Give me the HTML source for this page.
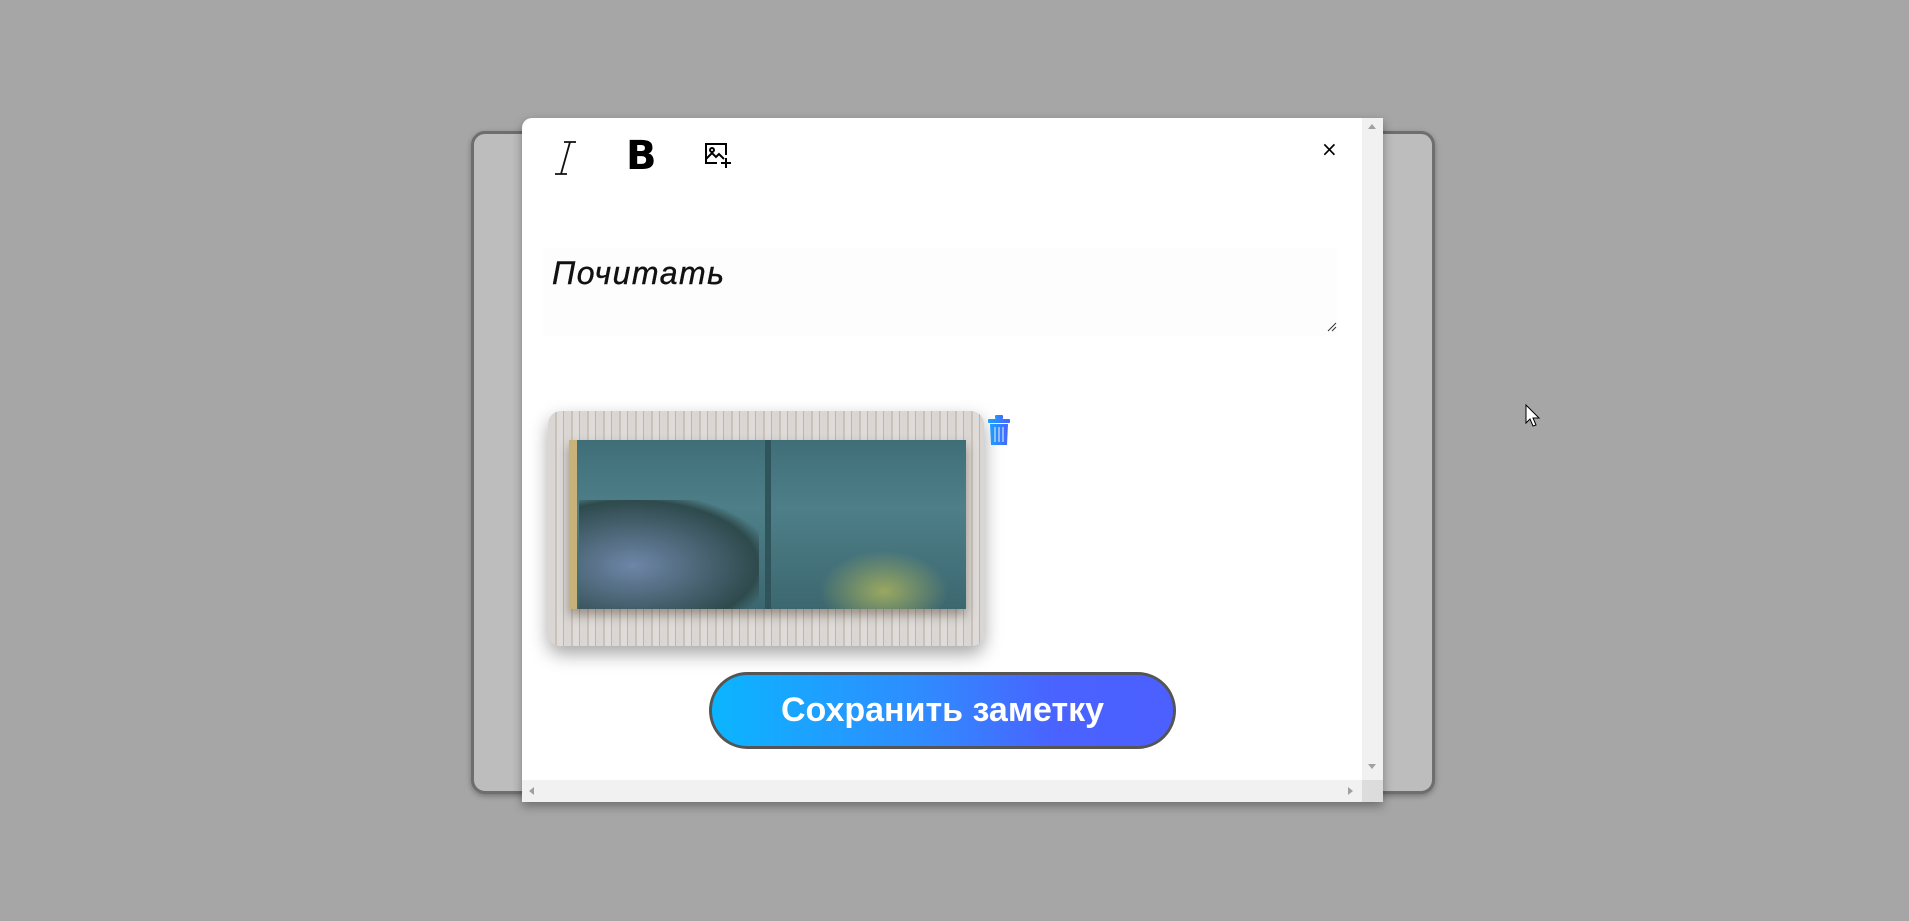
<!DOCTYPE html>
<html><head><meta charset="utf-8"><style>
html,body{margin:0;padding:0}
body{width:1909px;height:921px;background:#a6a6a6;position:relative;overflow:hidden;font-family:"Liberation Sans","DejaVu Sans",sans-serif}
.back{position:absolute;left:471px;top:131px;width:964px;height:663px;background:#bdbdbd;border:3px solid #6e6e6e;border-radius:14px;box-sizing:border-box;box-shadow:0 2px 6px rgba(0,0,0,.3)}
.modal{position:absolute;left:522px;top:118px;width:861px;height:684px;background:#fff;border-radius:10px 0 0 0;box-shadow:0 4px 10px rgba(0,0,0,.35);overflow:hidden}
.vs{position:absolute;right:0;top:0;width:21px;height:662px;background:#f1f1f1}
.hs{position:absolute;left:0;bottom:0;width:840px;height:22px;background:#f1f1f1}
.corner{position:absolute;right:0;bottom:0;width:21px;height:22px;background:#dcdcdc}
.ta{position:absolute;left:21px;top:130px;width:794px;height:88px;background:#fdfdfd}
.ttl{position:absolute;left:30px;top:137px;font:italic 32px "Liberation Sans",sans-serif;letter-spacing:1.5px;color:#111;-webkit-text-stroke:0.4px #111}
.img{position:absolute;left:26px;top:293px;width:436px;height:235px;border-radius:13px;overflow:hidden;background:repeating-linear-gradient(90deg,#d9d6d3 0 7px,#c9c2bb 7px 9px,#dedbd8 9px 15px,#bfb5ab 15px 16px);box-shadow:0 8px 18px rgba(0,0,0,.35)}
.book{position:absolute;left:21px;top:29px;width:397px;height:169px;background:linear-gradient(180deg,#3f6e78,#4e7f88 40%,#3c6770);box-shadow:0 6px 10px rgba(60,40,20,.4)}
.btn{position:absolute;left:187px;top:554px;width:467px;height:77px;border-radius:39px;border:3px solid #555;box-sizing:border-box;background:linear-gradient(90deg,#0bb5ff,#2f8cff 45%,#4a62ff 75%,#4c60ff);color:#fff;font:bold 34px "Liberation Sans",sans-serif;text-align:center;line-height:70px}
</style></head><body>
<div class="back"></div>
<div class="modal">
 <svg style="position:absolute;left:30px;top:22px" width="30" height="36" viewBox="0 0 30 36" fill="none" stroke="#111" stroke-width="1.8"><path d="M12 2h12M3 34h12M18 2L9 34"/></svg>
 <div style="position:absolute;left:104px;top:15px;font:bold 40px 'DejaVu Sans',sans-serif;color:#000">B</div>
 <svg style="position:absolute;left:182px;top:24px" width="28" height="28" viewBox="0 0 28 28" fill="none" stroke="#000" stroke-width="2"><path d="M13 21H2V2h20v11"/><circle cx="8" cy="8" r="2"/><path d="M2 17l6-6 4 4 3-3 5 5"/><path d="M22 16v10M17 21h10"/></svg>
 <div style="position:absolute;left:799px;top:19px;font:20px 'DejaVu Sans',sans-serif;color:#000">×</div>
 <div class="ta"></div>
 <div class="ttl">Почитать</div>
 <svg style="position:absolute;left:805px;top:204px" width="10" height="10"><path d="M1 9L9 1M5 9L9 5" stroke="#333"/></svg>
 <div class="img"><div class="book">
  <div style="position:absolute;left:0;top:0;width:8px;height:169px;background:#c8b27a"></div>
  <div style="position:absolute;left:196px;top:0;width:6px;height:169px;background:#2f545c"></div>
  <div style="position:absolute;left:10px;top:60px;width:180px;height:109px;background:radial-gradient(ellipse at 30% 60%,#6e86a8,#2e4a4c 70%,transparent 80%)"></div>
  <div style="position:absolute;left:250px;top:110px;width:130px;height:59px;background:radial-gradient(ellipse at 50% 70%,#9aa860,transparent 70%)"></div>
 </div></div>
 <svg style="position:absolute;left:465px;top:296px" width="24" height="32" viewBox="0 0 24 32"><defs><linearGradient id="g" x1="0" x2="1"><stop offset="0" stop-color="#1aa0ff"/><stop offset="1" stop-color="#4a64ff"/></linearGradient></defs><rect x="8" y="1" width="8" height="4" rx="1" fill="url(#g)"/><rect x="1" y="5" width="22" height="4" rx="1" fill="url(#g)"/><path d="M3 10h18l-1 21H4z" fill="url(#g)"/><path d="M8 13v15M12 13v15M16 13v15" stroke="#cfe3ff" stroke-width="1.2"/></svg>
 <div class="btn">Сохранить заметку</div>
 <div class="vs"><div style="position:absolute;left:6px;top:6px;border:4px solid transparent;border-bottom:5px solid #a0a0a0;border-top:0"></div><div style="position:absolute;left:6px;top:646px;border:4px solid transparent;border-top:5px solid #a0a0a0;border-bottom:0"></div></div>
 <div class="hs"><div style="position:absolute;left:7px;top:7px;border:4px solid transparent;border-right:5px solid #a0a0a0;border-left:0"></div><div style="position:absolute;left:826px;top:7px;border:4px solid transparent;border-left:5px solid #a0a0a0;border-right:0"></div></div>
 <div class="corner"></div>
</div>
<svg style="position:absolute;left:1525px;top:404px" width="16" height="24" viewBox="0 0 16 24"><path d="M1 1v18l4-4 3 7 3-1-3-7h6z" fill="#fff" stroke="#000" stroke-width="1"/></svg>
</body></html>
